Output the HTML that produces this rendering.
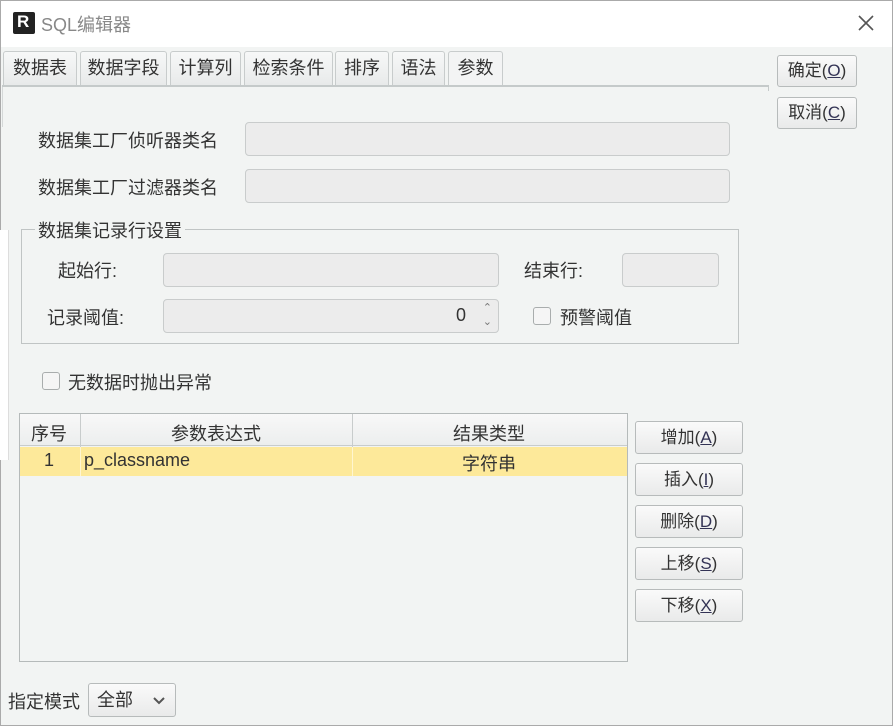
<!DOCTYPE html>
<html><head><meta charset="utf-8"><style>
*{box-sizing:border-box;margin:0;padding:0}
body{width:893px;height:726px;background:#f2f4f3;font-family:"Liberation Sans","Noto Sans CJK SC",sans-serif;color:#333;position:relative;overflow:hidden;font-size:18px}
.a{position:absolute}
.title{left:0;top:0;width:893px;height:47px;background:#fff;border:1px solid #aaa;border-bottom:none}
.tab{top:51px;height:34px;border:1px solid #c8cccc;border-bottom:none;background:linear-gradient(#f7f8f8,#e8eaea);line-height:33px;text-align:center;font-size:18px;color:#333;border-radius:3px 3px 0 0}
.inp{background:#ececec;border:1px solid #c9cccc;border-radius:4px}
.btn{background:linear-gradient(#fafafa,#e9eaea);border:1px solid #b7bbbb;border-radius:3px;text-align:center;font-size:17px;color:#333}
.btn u{color:#335}
.cb{width:18px;height:18px;border:1px solid #a9adad;border-radius:3px;background:#f5f5f5}
</style></head><body>
<div class="a title"></div>
<div class="a" style="left:13px;top:12px;width:22px;height:22px;background:#222;border-radius:2px"><span style="position:absolute;left:4px;top:1px;color:#fff;font-weight:bold;font-size:17px;line-height:18px">R</span></div>
<div class="a" style="left:41px;top:11px;font-size:18px;color:#888">SQL编辑器</div>
<svg class="a" style="left:858px;top:15px" width="16" height="16"><path d="M1 1L15 15M15 1L1 15" stroke="#555" stroke-width="1.6"/></svg>
<div class="a" style="left:0;top:0;width:1px;height:726px;background:#aaa"></div>
<div class="a" style="right:0;top:0;width:1px;height:726px;background:#aaa"></div>
<div class="a" style="left:0;bottom:0;width:893px;height:1px;background:#aaa"></div>

<div class="a tab" style="left:3px;width:74px">数据表</div>
<div class="a tab" style="left:80px;width:87px">数据字段</div>
<div class="a tab" style="left:170px;width:71px">计算列</div>
<div class="a tab" style="left:244px;width:89px">检索条件</div>
<div class="a tab" style="left:335px;width:54px">排序</div>
<div class="a tab" style="left:392px;width:53px">语法</div>
<div class="a tab" style="left:448px;width:55px;background:#f3f4f4;top:51px;height:36px">参数</div>
<div class="a" style="left:2px;top:85px;width:767px;height:2px;background:#c5caca"></div>
<div class="a" style="left:768px;top:85px;width:1px;height:6px;background:#c5caca"></div>
<div class="a" style="left:2px;top:87px;width:1px;height:40px;background:#d5d8d8"></div>

<div class="a btn" style="left:777px;top:55px;width:80px;height:32px;line-height:30px">确定(<u>O</u>)</div>
<div class="a btn" style="left:777px;top:97px;width:80px;height:32px;line-height:30px">取消(<u>C</u>)</div>

<div class="a" style="left:38px;top:127px">数据集工厂侦听器类名</div>
<div class="a inp" style="left:245px;top:122px;width:485px;height:34px"></div>
<div class="a" style="left:38px;top:174px">数据集工厂过滤器类名</div>
<div class="a inp" style="left:245px;top:169px;width:485px;height:34px"></div>

<div class="a" style="left:0;top:230px;width:9px;height:230px;background:#fff;border-right:1px solid #ddd"></div>

<div class="a" style="left:21px;top:229px;width:718px;height:115px;border:1px solid #c0c4c4"></div>
<div class="a" style="left:35px;top:217px;background:#f2f4f3;padding:0 3px">数据集记录行设置</div>
<div class="a" style="left:58px;top:257px">起始行:</div>
<div class="a inp" style="left:163px;top:253px;width:336px;height:34px"></div>
<div class="a" style="left:524px;top:257px">结束行:</div>
<div class="a inp" style="left:622px;top:253px;width:97px;height:34px"></div>
<div class="a" style="left:47px;top:304px">记录阈值:</div>
<div class="a inp" style="left:163px;top:299px;width:336px;height:34px"><span style="position:absolute;right:32px;top:5px">0</span><span style="position:absolute;right:6px;top:1px;font-size:11px;color:#777;line-height:14px">⌃<br>⌄</span></div>
<div class="a cb" style="left:533px;top:307px"></div>
<div class="a" style="left:560px;top:304px">预警阈值</div>

<div class="a cb" style="left:42px;top:372px"></div>
<div class="a" style="left:68px;top:369px">无数据时抛出异常</div>

<div class="a" style="left:19px;top:413px;width:609px;height:249px;border:1px solid #b5baba;background:#f2f4f3"></div>
<div class="a" style="left:20px;top:414px;width:607px;height:32px;background:linear-gradient(#f8f8f8,#eceeee);border-bottom:1px solid #c8cccc"></div>
<div class="a" style="left:80px;top:414px;width:1px;height:62px;background:#c8cccc"></div>
<div class="a" style="left:352px;top:414px;width:1px;height:62px;background:#c8cccc"></div>
<div class="a" style="left:31px;top:420px">序号</div>
<div class="a" style="left:171px;top:420px">参数表达式</div>
<div class="a" style="left:453px;top:420px">结果类型</div>
<div class="a" style="left:20px;top:447px;width:607px;height:29px;background:#fde99a"></div>
<div class="a" style="left:80px;top:447px;width:1px;height:29px;background:#fff6d0"></div>
<div class="a" style="left:352px;top:447px;width:1px;height:29px;background:#fff6d0"></div>
<div class="a" style="left:44px;top:450px">1</div>
<div class="a" style="left:84px;top:450px">p_classname</div>
<div class="a" style="left:462px;top:450px">字符串</div>

<div class="a btn" style="left:635px;top:421px;width:108px;height:33px;line-height:31px">增加(<u>A</u>)</div>
<div class="a btn" style="left:635px;top:463px;width:108px;height:33px;line-height:31px">插入(<u>I</u>)</div>
<div class="a btn" style="left:635px;top:505px;width:108px;height:33px;line-height:31px">删除(<u>D</u>)</div>
<div class="a btn" style="left:635px;top:547px;width:108px;height:33px;line-height:31px">上移(<u>S</u>)</div>
<div class="a btn" style="left:635px;top:589px;width:108px;height:33px;line-height:31px">下移(<u>X</u>)</div>

<div class="a" style="left:8px;top:688px">指定模式</div>
<div class="a btn" style="left:88px;top:683px;width:88px;height:34px;text-align:left;padding-left:8px;line-height:32px;font-size:18px">全部<svg style="position:absolute;right:10px;top:13px" width="12" height="8"><path d="M1 1L6 6L11 1" stroke="#555" stroke-width="2" fill="none"/></svg></div>
</body></html>
